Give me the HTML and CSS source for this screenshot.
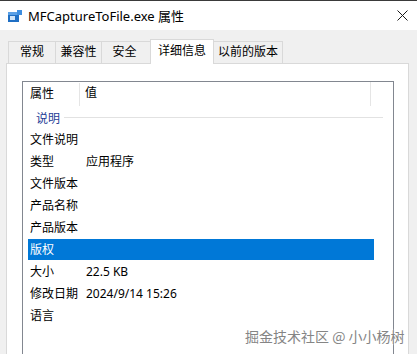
FILE: index.html
```html
<!DOCTYPE html>
<html>
    <head>
        <meta charset="utf-8">
        <title>MFCaptureToFile.exe 属性</title>
        <link rel="stylesheet" href="styles.css">
    </head>
    <body>
        <div id="window">
            <!--title bar with app icon and close button-->
            <div class="titlebar">
                <svg class="appicon" width="14" height="13" viewBox="0 0 14 13">
                    <rect x="0" y="2" width="11" height="10" fill="#1f6fc4"/>
                    <rect x="0" y="2" width="11" height="3" fill="#5aa0e6"/>
                    <rect x="2" y="6" width="5" height="4" fill="#cfe4f8"/>
                    <rect x="9" y="0" width="5" height="5" fill="#3d8ee0"/>
                </svg>
                <span class="title">MFCaptureToFile.exe 属性</span>
                <svg class="close" width="11" height="11" viewBox="0 0 11 11">
                    <line x1="0.5" y1="0.5" x2="10.5" y2="10.5" stroke="#1a1a1a" stroke-width="1"/>
                    <line x1="10.5" y1="0.5" x2="0.5" y2="10.5" stroke="#1a1a1a" stroke-width="1"/>
                </svg>
            </div>

            <div class="content">
                <!--tabs-->
                <div class="tabs">
                    <div class="tab general">常规</div>
                    <div class="tab compat">兼容性</div>
                    <div class="tab security">安全</div>
                    <div class="tab selected">详细信息</div>
                    <div class="tab previous">以前的版本</div>
                </div>

                <div class="panel">
                    <div class="list">
                        <div class="header">
                            <div class="hcol name">属性</div>
                            <div class="hcol value">值</div>
                        </div>
                        <div class="group">
                            <span>说明</span>
                            <div class="groupline"></div>
                        </div>
                        <div class="row"><span class="name">文件说明</span><span class="value"></span></div>
                        <div class="row"><span class="name">类型</span><span class="value">应用程序</span></div>
                        <div class="row"><span class="name">文件版本</span><span class="value"></span></div>
                        <div class="row"><span class="name">产品名称</span><span class="value"></span></div>
                        <div class="row"><span class="name">产品版本</span><span class="value"></span></div>
                        <div class="row active"><span class="name">版权</span><span class="value"></span></div>
                        <div class="row"><span class="name">大小</span><span class="value">22.5 KB</span></div>
                        <div class="row"><span class="name">修改日期</span><span class="value">2024/9/14 15:26</span></div>
                        <div class="row"><span class="name">语言</span><span class="value"></span></div>
                    </div>
                </div>
            </div>

            <div class="watermark">掘金技术社区 @ 小小杨树</div>
        </div>
    </body>
</html>
```

FILE: styles.css
```css
body {
margin: 0;
font-family: "Noto Sans", "Noto Sans CJK SC", sans-serif;
font-size: 12px;
color: #000;
overflow: hidden;
}

#window {
position: relative;
width: 417px;
height: 354px;
background-color: #f0f0f0;
overflow: hidden;
}

.titlebar {
display: flex;
align-items: center;
height: 29px;
background-color: white;
border-top: 1px solid #3a3a3a;
padding-left: 8px;
}

.appicon {
margin-right: 6px;
margin-top: 1px;
}

.title {
flex: 1;
font-size: 13px;
}

.close {
margin-right: 9px;
}

.content {
padding-left: 6px;
padding-top: 11px;
width: 403px;
}

.tabs {
display: flex;
height: 22px;
padding-left: 2px;
}

.tab {
box-sizing: border-box;
height: 22px;
line-height: 20px;
text-align: center;
border: 1px solid #d9d9d9;
border-bottom: none;
margin-right: -1px;
background-color: #f0f0f0;
}

.tab.general { width: 48px; }
.tab.compat { width: 47px; }
.tab.security { width: 51px; padding-right: 4px; }
.tab.previous { width: 70px; }

.tab.selected {
position: relative;
z-index: 1;
width: 64px;
background-color: white;
height: 25px;
margin-top: -2px;
margin-left: -1px;
line-height: 22px;
}

.panel {
background-color: white;
border: 1px solid #d9d9d9;
height: 300px;
padding: 17px 0 0 15px;
}

.list {
width: 370px;
height: 290px;
border: 1px solid #828790;
}

.header {
display: flex;
height: 24px;
}

.hcol {
line-height: 22px;
padding-left: 7px;
}

.hcol.name {
width: 49px;
border-right: 1px solid #e5e5e5;
margin-top: 1px;
}

.hcol.value {
width: 285px;
border-right: 1px solid #e5e5e5;
padding-left: 5px;
}

.group {
display: flex;
align-items: center;
height: 23px;
padding-left: 13px;
color: #1e3c96;
}

.groupline {
flex: 1;
height: 1px;
background-color: #e2e2e2;
margin-left: 4px;
margin-right: 10px;
}

.row {
display: flex;
height: 22px;
line-height: 22px;
margin-left: 5px;
width: 346px;
}

.row .name {
width: 56px;
padding-left: 2px;
}

.row.active {
background-color: #0078d7;
color: white;
height: 21px;
line-height: 21px;
margin-bottom: 1px;
}

.watermark {
position: absolute;
left: 245px;
top: 326px;
font-family: "Noto Sans CJK SC", sans-serif;
font-size: 14px;
color: #858585;
text-shadow: 0 0 2px white, 0 0 2px white;
}
```
